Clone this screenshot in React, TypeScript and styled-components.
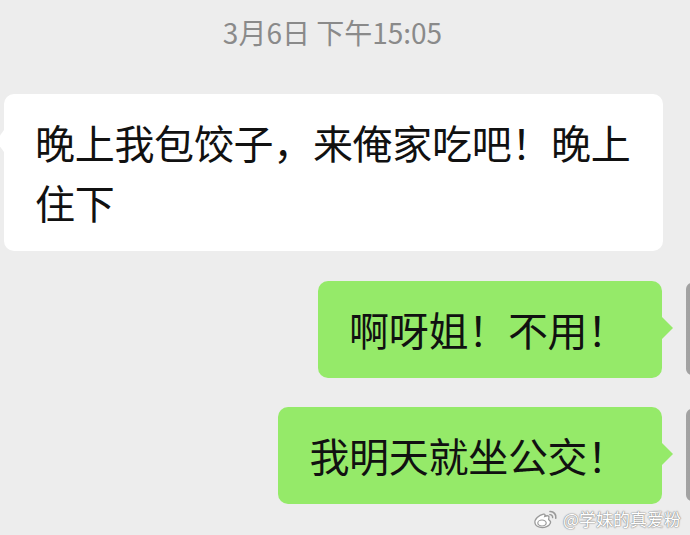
import React from "react";
import styled, { createGlobalStyle, css } from "styled-components";

const GlobalStyle = createGlobalStyle`
  html, body { margin: 0; padding: 0; background: #ededed; }
  * { box-sizing: border-box; }
`;

const Screen = styled.div`
  position: relative;
  width: 690px;
  height: 535px;
  overflow: hidden;
  background: #ededed;
  display: flex;
  flex-direction: column;
  font-family: "Noto Sans CJK SC", "Noto Sans", sans-serif;
`;

const Timestamp = styled.div`
  margin-top: 14px;
  padding-right: 25px;
  text-align: center;
  font-size: 28px;
  line-height: 36px;
  color: #8a8a8a;
`;

const Row = styled.div<{ $side: "left" | "right"; $top: number }>`
  display: flex;
  align-items: flex-start;
  margin-top: ${(p) => p.$top}px;
  ${(p) =>
    p.$side === "right"
      ? css`
          justify-content: flex-end;
          gap: 24px;
          margin-right: -86px;
        `
      : css`
          justify-content: flex-start;
          padding-left: 4px;
        `}
`;

const Bubble = styled.div<{ $side: "left" | "right"; $width?: number }>`
  position: relative;
  font-size: 40px;
  line-height: 60px;
  letter-spacing: -0.3px;
  color: #111;
  border-radius: 10px;
  background: ${(p) => (p.$side === "right" ? "#95ea69" : "#ffffff")};
  ${(p) => (p.$width ? `width: ${p.$width}px;` : "")}
  padding: ${(p) =>
    p.$side === "right" ? "18px 35px 19px 31px" : "18px 22px 19px 31px"};
  word-break: break-all;

  &::after {
    content: "";
    position: absolute;
    top: 36px;
    width: 0;
    height: 0;
    border-top: 11px solid transparent;
    border-bottom: 11px solid transparent;
    ${(p) =>
      p.$side === "right"
        ? css`
            right: -11px;
            border-left: 11px solid #95ea69;
          `
        : css`
            left: -8px;
            border-right: 8px solid #ffffff;
          `}
  }
`;

const Avatar = styled.div`
  flex: none;
  width: 90px;
  height: 92px;
  margin-top: 2px;
  border-radius: 6px;
  background: linear-gradient(90deg, #a3a3a3 0%, #6e6e6e 100%);
`;

const Watermark = styled.div`
  position: absolute;
  right: 9px;
  bottom: 5px;
  display: flex;
  align-items: center;
  gap: 5px;
  font-size: 17px;
  line-height: 22px;
  color: #ffffff;
  text-shadow: 0 0 1px #8a8a8a, 0 0 1px #8a8a8a, 0 0 2px #9a9a9a;
`;

const WeiboLogo = () => (
  <svg width="25" height="21" viewBox="0 0 25 21" fill="none">
    <path
      d="M10.5 5.2C5.8 6.2 1.2 10.2 2 14.2C2.8 18.4 9.4 19.6 13.6 17.6C17.6 15.7 18.6 12.4 16.4 11.3C15.4 10.8 15.4 10 15.8 9C16.6 6.8 14.6 6.2 11.8 7.3C12.4 5.6 11.9 4.9 10.5 5.2Z"
      fill="#ffffff"
      stroke="#9a9a9a"
      strokeWidth="1.3"
    />
    <ellipse cx="9" cy="14" rx="4.2" ry="3" stroke="#9a9a9a" strokeWidth="1.2" />
    <path d="M17 2.5a5.5 5.5 0 0 1 5.8 6.6" stroke="#9a9a9a" strokeWidth="1.6" strokeLinecap="round" />
    <path d="M16.8 5.6a2.6 2.6 0 0 1 2.8 3" stroke="#9a9a9a" strokeWidth="1.4" strokeLinecap="round" />
  </svg>
);

export default function App() {
  return (
    <>
      <GlobalStyle />
      <Screen>
        <Timestamp>3月6日 下午15:05</Timestamp>
        <Row $side="left" $top={44}>
          <Bubble $side="left" $width={659}>
            晚上我包饺子，来俺家吃吧！晚上住下
          </Bubble>
        </Row>
        <Row $side="right" $top={30}>
          <Bubble $side="right">啊呀姐！不用！</Bubble>
          <Avatar />
        </Row>
        <Row $side="right" $top={29}>
          <Bubble $side="right">我明天就坐公交！</Bubble>
          <Avatar />
        </Row>
        <Watermark>
          <WeiboLogo />
          <span>@学妹的真爱粉</span>
        </Watermark>
      </Screen>
    </>
  );
}
